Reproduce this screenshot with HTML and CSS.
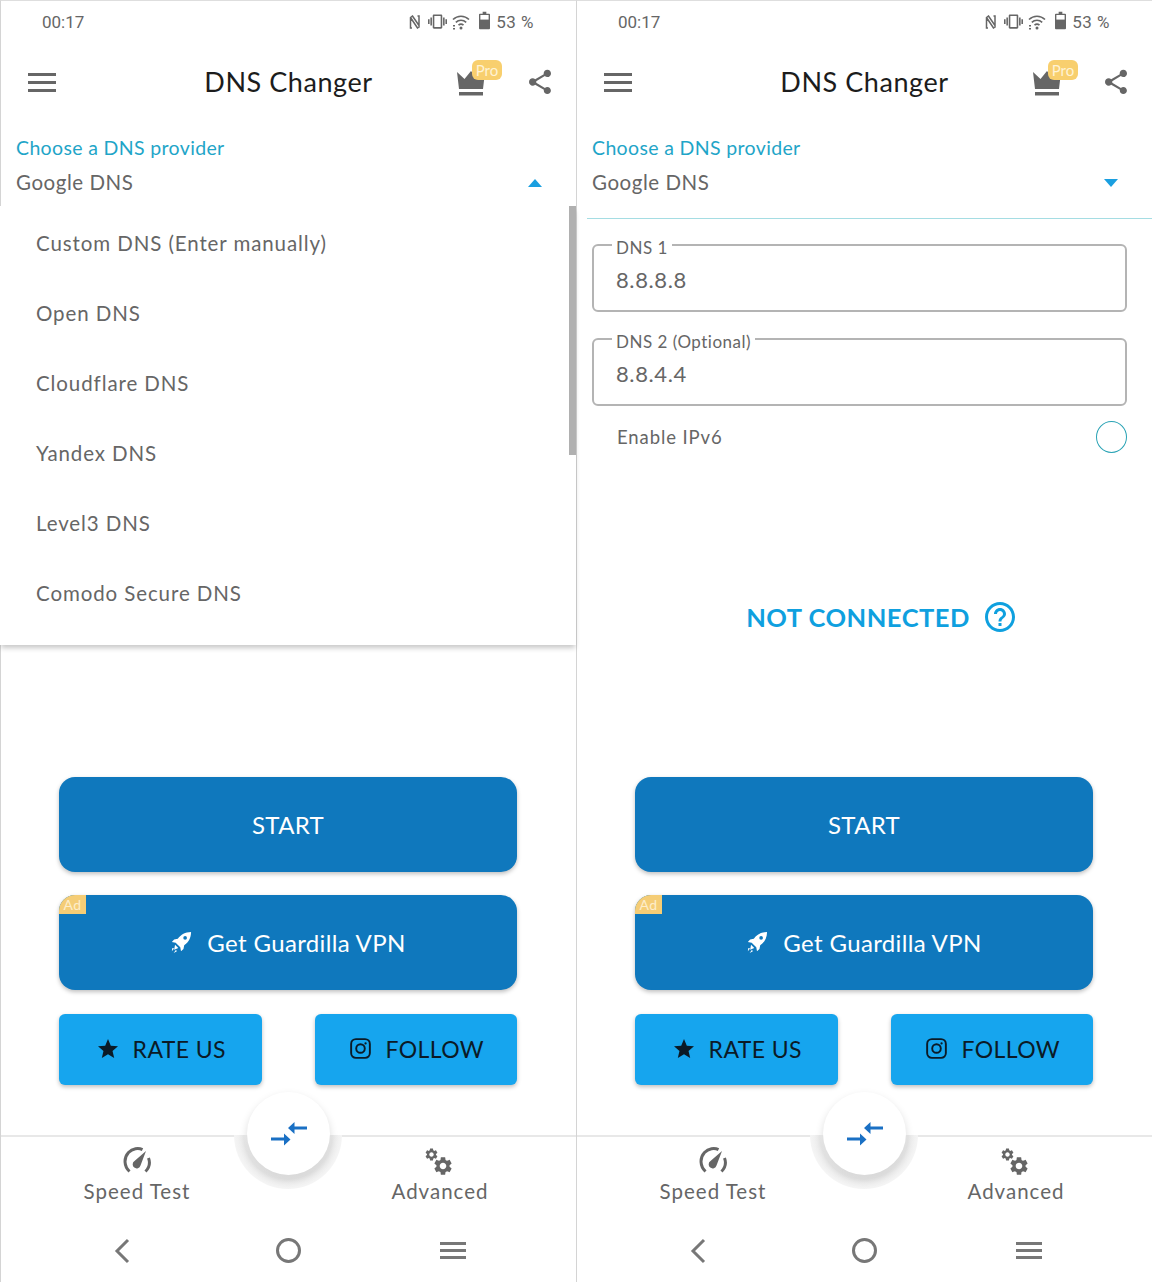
FILE: index.html
```html
<!DOCTYPE html>
<html lang="en">
<head>
    <meta charset="UTF-8">
    <meta name="viewport" content="width=device-width, initial-scale=1.0">
    <title>DNS Changer</title>
    <link rel="stylesheet" href="styles.css">
</head>
<body>
    <svg class="sprite" width="0" height="0">
        <symbol id="i-nfc" viewBox="0 0 12 14"><path d="M3 13H1.500V2.500L3.500 1 10 10.500V1H8.500M1.500 2.500L8.500 13l2-1.500" fill="none" stroke="currentColor" stroke-width="1.500"/></symbol>
        <symbol id="i-vibrate" viewBox="0 0 24 24"><path d="M0 15h2V9H0v6zm3 2h2V7H3v10zm19-8v6h2V9h-2zm-3 8h2V7h-2v10zM16.500 3h-9C6.670 3 6 3.670 6 4.500v15c0 .83.67 1.500 1.500 1.500h9c.83 0 1.500-.67 1.500-1.500v-15c0-.83-.67-1.500-1.500-1.500zM16 19H8V5h8v14z" fill="currentColor"/></symbol>
        <symbol id="i-wifi" viewBox="0 0 18 16"><g fill="none" stroke="currentColor" stroke-width="1.600"><path d="M1 5.500c4.500-4.400 11.500-4.400 16 0"/><path d="M3.800 8.400c3-2.800 7.400-2.800 10.400 0"/><path d="M6.500 11.200c1.500-1.300 3.500-1.300 5 0"/></g><circle cx="9" cy="14" r="1.500" fill="currentColor"/><path d="M1 11h2v1.500H1zM1 14h2v1.500H1z" fill="currentColor"/></symbol>
        <symbol id="i-battery" viewBox="0 0 12 19"><path d="M4 0h4v2h3a1 1 0 0 1 1 1v15a1 1 0 0 1-1 1H1a1 1 0 0 1-1-1V3a1 1 0 0 1 1-1h3z" fill="currentColor"/><path d="M1.500 3.500h9v5h-9z" fill="#fff"/></symbol>
        <symbol id="i-crown" viewBox="0 0 28 25"><path d="M0 1l7.500 7L14 0l6.500 8L28 1l-2 17H2z" fill="currentColor"/><path d="M2 21h24v3.500H2z" fill="currentColor"/></symbol>
        <symbol id="i-share" viewBox="3 1.500 18 21"><path d="M18 16.080c-.76 0-1.440.3-1.960.77L8.910 12.700c.05-.23.09-.46.09-.7s-.04-.47-.09-.7l7.050-4.110c.54.5 1.250.81 2.040.81 1.660 0 3-1.340 3-3s-1.340-3-3-3-3 1.340-3 3c0 .24.04.47.09.7L8.040 9.810C7.500 9.310 6.790 9 6 9c-1.660 0-3 1.340-3 3s1.340 3 3 3c.79 0 1.500-.31 2.040-.81l7.120 4.160c-.05.21-.08.43-.08.65 0 1.610 1.310 2.920 2.920 2.920s2.920-1.310 2.920-2.920-1.310-2.920-2.920-2.920z" fill="currentColor"/></symbol>
        <symbol id="i-rocket" viewBox="0 0 24 24"><path d="M23 1c-6.500.2-11 2.500-14.500 7.500l-4 .8L2 12l4.200.8 5 5 .8 4.200 2.700-2.500.8-4C20.500 12 22.800 7.500 23 1zm-6.500 4.500a2 2 0 1 1 0 4 2 2 0 0 1 0-4z" fill="currentColor"/><path d="M5.500 15l3.500 3.500-4.500 2zM2.500 18.500l2 .6-2.500 2.900zM6.500 20.500l1 1.500-3.500 2z" fill="currentColor"/></symbol>
        <symbol id="i-star" viewBox="2 2 20 19"><path d="M12 17.270L18.180 21l-1.640-7.030L22 9.240l-7.190-.61L12 2 9.190 8.630 2 9.240l5.460 4.730L5.820 21z" fill="currentColor"/></symbol>
        <symbol id="i-insta" viewBox="0 0 22 22"><rect x="1.200" y="1.200" width="19.600" height="19.600" rx="5" fill="none" stroke="currentColor" stroke-width="2"/><circle cx="11" cy="11" r="4.500" fill="none" stroke="currentColor" stroke-width="2"/><circle cx="16.300" cy="5.700" r="1.200" fill="currentColor"/></symbol>
        <symbol id="i-arrows" viewBox="0 0 36 25"><path d="M17 7l6.500-6v4.500H36v3H23.500V13zM0 16.500h13v-4l6.500 6-6.500 6v-5H0z" fill="currentColor"/></symbol>
        <symbol id="i-gauge" viewBox="0 0 28 26"><path d="M6.500 24.500C1 19.500.5 11 5.500 5.500 9.500 1.300 15.500.7 19.500 2.700M22.500 24.500c3.800-3.800 4.700-9 3-13.500" fill="none" stroke="currentColor" stroke-width="3"/><path d="M23 4l-5.500 14.500a4 4 0 1 1-6-4.500z" fill="currentColor"/></symbol>
        <symbol id="i-gear" viewBox="0 0 24 24"><path d="M19.140 12.940c.04-.3.06-.61.06-.94 0-.32-.02-.64-.07-.94l2.030-1.580c.18-.14.23-.41.12-.61l-1.920-3.320c-.12-.22-.37-.29-.59-.22l-2.390.96c-.5-.38-1.030-.7-1.620-.94l-.36-2.540c-.04-.24-.24-.41-.48-.41h-3.840c-.24 0-.43.17-.47.41l-.36 2.540c-.59.24-1.130.57-1.620.94l-2.390-.96c-.22-.08-.47 0-.59.22L2.740 8.870c-.12.21-.08.47.12.61l2.030 1.580c-.05.3-.09.63-.09.94s.02.64.07.94l-2.030 1.580c-.18.14-.23.41-.12.61l1.920 3.320c.12.22.37.29.59.22l2.390-.96c.5.38 1.030.7 1.620.94l.36 2.540c.05.24.24.41.48.41h3.840c.24 0 .44-.17.47-.41l.36-2.540c.59-.24 1.130-.56 1.620-.94l2.390.96c.22.08.47 0 .59-.22l1.920-3.320c.12-.22.07-.47-.12-.61l-2.010-1.580zM12 15.600c-1.980 0-3.600-1.620-3.600-3.600s1.620-3.600 3.600-3.600 3.600 1.620 3.600 3.600-1.620 3.600-3.600 3.600z" fill="currentColor"/></symbol>
        <symbol id="i-gears" viewBox="0 0 30 30"><use href="#i-gear" x="0" y="0" width="15" height="15"/><use href="#i-gear" x="8" y="8" width="22" height="22"/></symbol>
        <symbol id="i-help" viewBox="2 2 20 20"><path d="M11 18h2v-2h-2v2zm1-16C6.480 2 2 6.480 2 12s4.480 10 10 10 10-4.480 10-10S17.520 2 12 2zm0 18c-4.410 0-8-3.590-8-8s3.590-8 8-8 8 3.590 8 8-3.590 8-8 8zm0-14c-2.210 0-4 1.790-4 4h2c0-1.100.9-2 2-2s2 .9 2 2c0 2-3 1.750-3 5h2c0-2.250 3-2.500 3-5 0-2.210-1.790-4-4-4z" fill="currentColor"/></symbol>
        <symbol id="i-back" viewBox="0 0 16 26"><path d="M14 2L3 13l11 11" fill="none" stroke="currentColor" stroke-width="3"/></symbol>
    </svg>

    <div class="screens">
        <!-- dropdown open -->
        <section class="phone">
            <div class="status-bar">
                <span class="clock">00:17</span>
                <div class="status-icons">
                    <svg class="ic-nfc"><use href="#i-nfc"/></svg>
                    <svg class="ic-vibrate"><use href="#i-vibrate"/></svg>
                    <svg class="ic-wifi"><use href="#i-wifi"/></svg>
                    <svg class="ic-battery"><use href="#i-battery"/></svg>
                    <span class="percent">53 %</span>
                </div>
            </div>
            <header class="app-bar">
                <div class="burger"><span></span><span></span><span></span></div>
                <h1>DNS Changer</h1>
                <div class="app-actions">
                    <div class="crown">
                        <svg class="ic-crown"><use href="#i-crown"/></svg>
                        <span class="pro">Pro</span>
                    </div>
                    <svg class="ic-share"><use href="#i-share"/></svg>
                </div>
            </header>
            <main class="content">
                <div class="provider open">
                    <div class="provider-label">Choose a DNS provider</div>
                    <div class="provider-value">Google DNS<span class="caret up"></span></div>
                </div>
                <ul class="menu">
                    <li>Custom DNS (Enter manually)</li>
                    <li>Open DNS</li>
                    <li>Cloudflare DNS</li>
                    <li>Yandex DNS</li>
                    <li>Level3 DNS</li>
                    <li>Comodo Secure DNS</li>
                    <li class="scrollbar"></li>
                </ul>
            </main>
            <div class="actions">
                <button class="btn-big">START</button>
                <button class="btn-big">
                    <span class="ad">Ad</span>
                    <svg class="ic-rocket"><use href="#i-rocket"/></svg>
                    Get Guardilla VPN
                </button>
                <div class="btn-row">
                    <button class="btn-small"><svg class="ic-star"><use href="#i-star"/></svg>RATE US</button>
                    <button class="btn-small"><svg class="ic-insta"><use href="#i-insta"/></svg>FOLLOW</button>
                </div>
            </div>
            <div class="tab-bar">
                <div class="tab"><svg class="ic-gauge"><use href="#i-gauge"/></svg><span>Speed Test</span></div>
                <div class="tab"><svg class="ic-gears"><use href="#i-gears"/></svg><span>Advanced</span></div>
                <div class="fab-halo"></div>
                <div class="fab"><svg class="ic-arrows"><use href="#i-arrows"/></svg></div>
            </div>
            <nav class="nav-bar">
                <svg class="ic-back"><use href="#i-back"/></svg>
                <span class="nav-home"></span>
                <div class="nav-menu"><span></span><span></span><span></span></div>
            </nav>
        </section>

        <!-- dropdown closed -->
        <section class="phone">
            <div class="status-bar">
                <span class="clock">00:17</span>
                <div class="status-icons">
                    <svg class="ic-nfc"><use href="#i-nfc"/></svg>
                    <svg class="ic-vibrate"><use href="#i-vibrate"/></svg>
                    <svg class="ic-wifi"><use href="#i-wifi"/></svg>
                    <svg class="ic-battery"><use href="#i-battery"/></svg>
                    <span class="percent">53 %</span>
                </div>
            </div>
            <header class="app-bar">
                <div class="burger"><span></span><span></span><span></span></div>
                <h1>DNS Changer</h1>
                <div class="app-actions">
                    <div class="crown">
                        <svg class="ic-crown"><use href="#i-crown"/></svg>
                        <span class="pro">Pro</span>
                    </div>
                    <svg class="ic-share"><use href="#i-share"/></svg>
                </div>
            </header>
            <main class="content">
                <div class="provider">
                    <div class="provider-label">Choose a DNS provider</div>
                    <div class="provider-value">Google DNS<span class="caret"></span></div>
                </div>
                <fieldset class="field first">
                    <legend>DNS 1</legend>
                    <div class="field-value">8.8.8.8</div>
                </fieldset>
                <fieldset class="field">
                    <legend>DNS 2 (Optional)</legend>
                    <div class="field-value">8.8.4.4</div>
                </fieldset>
                <div class="ipv6">
                    <span>Enable IPv6</span>
                    <span class="radio"></span>
                </div>
                <div class="conn-state">
                    <span>NOT CONNECTED</span>
                    <svg class="ic-help"><use href="#i-help"/></svg>
                </div>
            </main>
            <div class="actions">
                <button class="btn-big">START</button>
                <button class="btn-big">
                    <span class="ad">Ad</span>
                    <svg class="ic-rocket"><use href="#i-rocket"/></svg>
                    Get Guardilla VPN
                </button>
                <div class="btn-row">
                    <button class="btn-small"><svg class="ic-star"><use href="#i-star"/></svg>RATE US</button>
                    <button class="btn-small"><svg class="ic-insta"><use href="#i-insta"/></svg>FOLLOW</button>
                </div>
            </div>
            <div class="tab-bar">
                <div class="tab"><svg class="ic-gauge"><use href="#i-gauge"/></svg><span>Speed Test</span></div>
                <div class="tab"><svg class="ic-gears"><use href="#i-gears"/></svg><span>Advanced</span></div>
                <div class="fab-halo"></div>
                <div class="fab"><svg class="ic-arrows"><use href="#i-arrows"/></svg></div>
            </div>
            <nav class="nav-bar">
                <svg class="ic-back"><use href="#i-back"/></svg>
                <span class="nav-home"></span>
                <div class="nav-menu"><span></span><span></span><span></span></div>
            </nav>
        </section>
    </div>
</body>
</html>
```

FILE: styles.css
```css
* { box-sizing: border-box; }

body {
    margin: 0;
    background: white;
    color: #666;
    font-family: Lato, "Open Sans", sans-serif;
}

.sprite { position: absolute; }

.screens { display: flex; width: 1152px; height: 1282px; overflow: hidden; }

.phone {
    width: 576px;
    height: 1282px;
    display: flex;
    flex-direction: column;
    border-left: 1px solid #d4d4d4;
    border-top: 1px solid #dedede;
}

/* status bar */
.status-bar {
    height: 43px;
    flex: none;
    display: flex;
    justify-content: space-between;
    align-items: center;
    padding: 0 42px 2px 41px;
    font-family: Roboto, sans-serif;
    font-size: 17px;
    color: #666;
}
.status-icons { display: flex; align-items: center; }
.ic-nfc { width: 12px; height: 14px; margin-right: 7px; }
.ic-vibrate { width: 19px; height: 19px; margin-right: 5px; }
.ic-wifi { width: 18px; height: 16px; margin-right: 9px; }
.ic-battery { width: 11px; height: 19px; margin-right: 6px; margin-top: -2px; }
.percent { letter-spacing: 0.5px; }

/* app bar */
.app-bar {
    height: 76px;
    flex: none;
    display: grid;
    grid-template-columns: 1fr auto 1fr;
    align-items: center;
    padding: 0 25px;
}
.app-bar h1 {
    margin: 0;
    padding-bottom: 2px;
    font-size: 27px;
    font-weight: 400;
    color: #1c1c1c;
    letter-spacing: 0.55px;
}
.burger { display: flex; flex-direction: column; gap: 5px; width: 28px; margin-left: 2px; }
.burger span, .nav-menu span { display: block; height: 3px; background: #666; }
.app-actions { display: flex; justify-content: flex-end; align-items: center; gap: 44px; }
.crown { position: relative; width: 28px; height: 25px; margin-top: 2px; }
.ic-crown { display: block; width: 28px; height: 25px; color: #666; }
.pro {
    position: absolute;
    left: 15px;
    top: -11px;
    width: 30px;
    height: 20px;
    border-radius: 6px;
    background: #f8cf6e;
    color: #fff3d4;
    font-size: 15px;
    line-height: 20px;
    text-align: center;
}
.ic-share { width: 22px; height: 26px; color: #666; }

/* provider select */
.content { flex: 1; position: relative; }
.provider {
    margin-left: 10px;
    padding: 16px 0 24px 5px;
    border-bottom: 1px solid #a5dde3;
}
.provider.open { border-bottom-color: transparent; }
.provider-label {
    font-size: 19.5px;
    line-height: 24px;
    color: #1fa5c8;
    letter-spacing: 0.35px;
}
.provider-value {
    display: flex;
    justify-content: space-between;
    align-items: center;
    margin-top: 10px;
    padding-right: 34px;
    font-size: 20.5px;
    line-height: 24px;
    letter-spacing: 0.55px;
}
.caret {
    width: 0;
    height: 0;
    margin-top: 2px;
    border-left: 7.5px solid transparent;
    border-right: 7.5px solid transparent;
    border-top: 8px solid #1a9fe0;
}
.caret.up { border-top: none; border-bottom: 8px solid #1a9fe0; }

/* dropdown overlay */
.menu {
    position: absolute;
    left: -1px;
    right: 0;
    top: 86px;
    height: 439px;
    margin: 0;
    padding: 2px 0 0 36px;
    list-style: none;
    background: white;
    box-shadow: 0 4px 5px -1px rgba(0, 0, 0, 0.22);
}
.menu li {
    height: 70px;
    display: flex;
    align-items: center;
    font-size: 20.5px;
    letter-spacing: 0.9px;
}
.menu .scrollbar {
    position: absolute;
    right: 0;
    top: 0;
    width: 7px;
    height: 249px;
    background: #b0b0b0;
}

/* dns fields */
.field {
    margin: 14px 25px 0 15px;
    padding: 0 0 0 18px;
    height: 80px;
    border: 2px solid #b4b4b4;
    border-radius: 6px;
    min-width: 0;
}
.field.first { margin-top: 13px; }
.field legend {
    padding: 6px 4px 0;
    font-size: 17px;
    line-height: 20px;
    letter-spacing: 0.5px;
    color: #666;
}
.field-value {
    margin: 7px 0 0 4px;
    font-size: 22px;
    line-height: 30px;
    letter-spacing: 0.6px;
}

.ipv6 {
    display: flex;
    justify-content: space-between;
    align-items: center;
    margin: 15px 25px 0 40px;
    font-size: 18.5px;
    letter-spacing: 0.9px;
}
.radio {
    width: 31px;
    height: 32px;
    border: 1.5px solid #2aa3b5;
    border-radius: 50%;
}

.conn-state {
    display: flex;
    justify-content: center;
    align-items: center;
    gap: 15px;
    margin-top: 149px;
    padding-left: 32px;
    font-size: 25.5px;
    font-weight: 700;
    color: #0fa0df;
    letter-spacing: 0.5px;
}
.ic-help { width: 30px; height: 30px; }

/* buttons */
.actions {
    flex: none;
    display: flex;
    flex-direction: column;
    padding: 0 59px 0 58px;
}
button { font-family: inherit; border: none; cursor: pointer; }
.btn-big {
    position: relative;
    height: 95px;
    margin-bottom: 23px;
    padding-bottom: 2px;
    display: flex;
    justify-content: center;
    align-items: center;
    background: #0f78bd;
    color: white;
    font-size: 24px;
    letter-spacing: 0.35px;
    border-radius: 16px;
    box-shadow: 0 2px 4px rgba(0, 0, 0, 0.25);
    overflow: hidden;
}
.ad {
    position: absolute;
    left: 0;
    top: 0;
    width: 27px;
    height: 19px;
    background: #f5cd76;
    color: #fdeecb;
    font-size: 14px;
    line-height: 19px;
    text-align: center;
}
.ic-rocket { width: 22px; height: 22px; margin-right: 15px; color: white; }
.btn-row { display: flex; justify-content: space-between; margin-top: 1px; }
.btn-small {
    width: 202.5px;
    height: 71px;
    padding: 0 0 2px 3px;
    display: flex;
    justify-content: center;
    align-items: center;
    background: #16a5ee;
    color: #0b1a26;
    font-size: 23px;
    letter-spacing: 0.4px;
    border-radius: 6px;
    box-shadow: 0 2px 4px rgba(0, 0, 0, 0.25);
}
.ic-star { width: 20px; height: 19px; margin-right: 15px; }
.ic-insta { width: 21px; height: 21px; margin-right: 14px; }

/* bottom tabs */
.tab-bar {
    position: relative;
    flex: none;
    height: 90px;
    margin-top: 50px;
    display: flex;
    justify-content: space-between;
    border-top: 2px solid #e8e8e8;
}
.tab {
    width: 272px;
    display: flex;
    flex-direction: column;
    align-items: center;
    padding-top: 10px;
    font-size: 20.5px;
    letter-spacing: 1px;
}
.tab span { margin-top: 5px; line-height: 26px; }
.ic-gauge { width: 28px; height: 26px; color: #666; }
.ic-gears { width: 30px; height: 30px; margin-bottom: -4px; margin-left: -2px; color: #666; }
.fab-halo {
    position: absolute;
    left: 233px;
    top: -2px;
    width: 108px;
    height: 54px;
    border-radius: 0 0 54px 54px;
    background: radial-gradient(circle 54px at 50% 0, #f7f7f7 74%, #ebebeb 82%, #f5f5f5 100%);
}
.fab {
    position: absolute;
    left: 246px;
    top: -45px;
    width: 83px;
    height: 83px;
    display: flex;
    justify-content: center;
    align-items: center;
    border-radius: 50%;
    background: white;
    box-shadow: 0 4px 8px rgba(0, 0, 0, 0.15);
}
.ic-arrows { width: 36px; height: 25px; color: #1a70c4; }

/* android nav */
.nav-bar {
    flex: none;
    height: 57px;
    display: grid;
    grid-template-columns: repeat(3, 166px);
    justify-items: center;
    align-items: center;
    padding: 0 0 6px 38px;
}
.ic-back { width: 16px; height: 26px; color: #777; }
.nav-home { width: 25px; height: 25px; border: 3px solid #777; border-radius: 50%; }
.nav-menu { width: 26px; margin-left: -2px; display: flex; flex-direction: column; gap: 4px; }
.nav-menu span { background: #777; }
```
